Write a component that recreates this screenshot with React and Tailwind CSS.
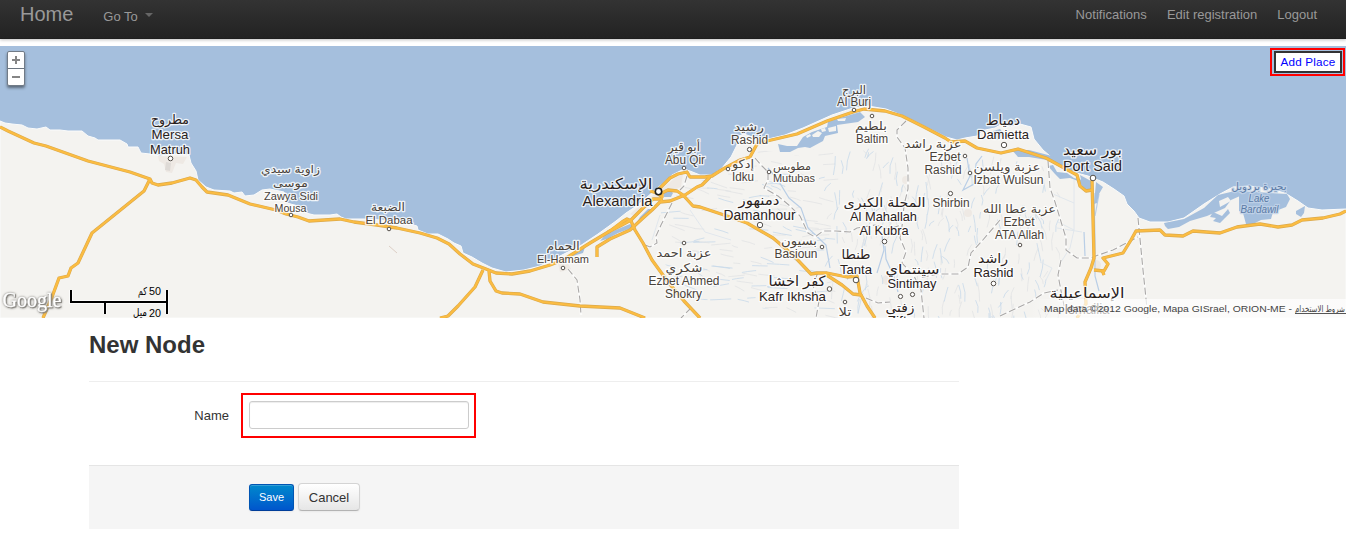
import React from "react";

const COAST =
  "M0 121L5 123L12 124L22 125L28 128L37 129L46 127L50 130L60 130L68 131L82 131L88 136L95 138L98 140L120 140L127 144L128 147L138 147L141 153L150 154L160 156L174 154L189 155L191 163L196 171L198 180L206 187L214 190L230 191L234 193L242 192L245 196L254 195L262 190L270 189L284 192L287 203L298 206L306 213L314 215L330 215L337 214L341 217L346 219L364 219L400 221L410 224L417 226L418 230L428 234L438 234L448 239L454 243L461 246L463 253L472 257L482 263L492 268L506 272L524 270L540 266L556 258L580 246L598 234L616 221L626 213L638 205L646 198L654 191L662 184L672 175L684 169L690 171L700 175L712 175L722 168L731 157L737 145L739 136L744 134L755 138L768 139L785 135L803 128L832 115L853 108L868 106L886 109L904 116L928 128L946 137L957 140L965 138L977 136L985 130L995 128L1002 124L1010 127L1020 124L1031 127L1034 139L1043 150L1057 162L1073 172L1088 176L1103 182L1114 189L1124 196L1127 204L1134 211L1139 218L1150 222L1168 222L1184 218L1204 204L1220 194L1233 187L1250 186L1270 189L1285 193L1298 201L1308 208L1322 210L1346 209V318H0Z";

const WATER = [
  "M1164 223L1184 219L1204 208L1218 195L1239 190L1240 196L1231 200L1225 208L1207 216L1190 221L1179 227L1168 229L1165 226Z",
  "M1239 191L1287 194L1290 199L1286 207L1273 212L1271 219L1261 220L1253 224L1246 224L1243 213L1239 211Z",
  "M1213 212L1222 216L1228 209L1230 213L1225 218L1220 223L1213 221L1216 218L1210 217Z",
  "M1296 211L1305 206L1304 213L1301 217L1296 214Z",
  "M778 144L787 146L797 146L803 137L812 132L827 127L828 122L840 118L860 112L865 117L858 122L837 125L838 133L825 136L823 141L810 148L805 147L798 148L790 152L780 152Z",
  "M993 131L1000 129L1004 134L998 140L991 137Z",
  "M1012 150L1029 150L1048 155L1060 158L1066 163L1060 167L1047 160L1029 157L1018 157Z",
  "M1048 166L1053 165L1057 172L1067 173L1074 178L1087 181L1091 186L1085 189L1078 181L1070 178L1060 179L1055 174Z",
  "M1080 175L1091 181L1091 191L1083 188Z",
  "M1096 182L1103 187L1099 194L1097 203L1094 204Z",
  "M600 241L606 234L618 229L630 224L634 227L618 233L607 239Z",
  "M640 217L648 209L652 209L644 218L636 224Z",
  "M664 193L670 190L673 193L671 197L664 197Z",
  "M574 251L585 247L583 253L573 256Z",
];

const ISLANDS = [
  "M812 135L818 131L822 133L819 137L813 137Z",
  "M821 129L825 128L826 131L822 132Z",
  "M828 128L836 126L836 131L829 132Z",
  "M837 119L846 118L845 121L838 121Z",
  "M806 136L810 134L811 136L807 138Z",
  "M1219 201L1228 197L1231 201L1220 207Z",
];

const ROADS = [
  "M0 127L8 131L34 143L46 146L88 161L130 172L150 179L152 183L158 185L172 183L190 178L196 180L202 187L207 192L228 195L250 204L276 210L286 214L298 217L309 221L340 219L354 222L377 225L397 228L420 233L437 238L449 244L460 254L473 264L486 269L496 273L512 274L530 271L550 265L563 260L590 243L610 231L622 222L627 219L631 221L635 230L643 243L652 260L668 282L684 301L700 318",
  "M150 179L144 191L92 233L78 263L71 268L68 276L59 278L52 297L43 318",
  "M483 270L475 287L458 306L448 316L440 318",
  "M489 271L490 281L496 291L502 293L520 294L543 302L580 306L600 307L620 308L640 316L645 318",
  "M597 257L597 247L610 239L630 230L643 218L652 210L660 202L670 201L685 195L697 187L702 185L710 177",
  "M608 232L620 226L631 220L643 208L653 199L661 199L662 202",
  "M650 191L657 193L662 197L662 193L668 190L677 191L683 195L693 206L700 207L727 216L747 223L773 238L793 255L811 274L817 273L827 273L847 277L857 276L860 293L867 306L875 318",
  "M658 190L670 178L678 174L687 172L690 177L705 177L712 176L723 169L740 160L750 157L757 144L767 141L797 134L827 121L853 112L864 109L885 111L902 116L924 127L945 138L951 142L965 141L977 148L1001 153L1018 149L1046 158L1077 175L1080 186L1086 191L1092 190",
  "M825 274L842 285L853 294L861 295",
  "M1092 180L1093 218L1094 258L1091 268L1085 282L1086 304L1077 318",
  "M1094 270L1104 271L1108 264L1103 258L1111 256L1123 253L1131 240L1136 231L1160 230L1165 235L1183 236L1193 231L1220 233L1237 227L1260 224L1278 227L1292 225L1302 220L1323 218L1340 214L1346 211",
  "M1102 270L1104 275",
];

const RAILS = [
  "M672 203L661 225L656 236L657 243L650 247L645 245",
  "M687 176L684 186L680 190",
  "M568 269L577 280L580 300L581 315",
  "M755 158L762 166L768 172L768 180L764 188L778 196L790 206L800 216L808 233L815 237L823 231L836 231L850 232L857 228L875 225L889 229L901 225",
  "M906 121L897 130L897 137L905 148L908 168L908 189L904 205L903 220L900 238L906 252L902 263L914 276L921 290L924 318",
  "M1048 161L1050 188L1055 202L1066 238L1066 250L1077 258L1090 258L1113 250L1138 237",
  "M1061 260L1058 275L1062 296L1065 310",
  "M1138 218L1143 270L1148 318",
  "M1000 220L982 241L971 253L968 267L958 274L938 274L920 278",
  "M1000 316L1030 302L1044 293L1058 290",
  "M818 272L813 286L819 301L816 318",
  "M866 298L878 303L890 302",
  "M691 308L681 318",
];

const RIVERS = [
  "M885 246L886 259L894 277L898 292",
  "M1094 193L1095 240L1095 276L1099 291",
  "M1099 194L1095 216",
  "M1084 232L1085 256",
  "M768 168L778 180L789 198L801 208L808 228L826 245L830 268",
  "M967 158L970 176L963 190L974 184L976 164L982 156",
  "M882 235L884 250L877 273",
];

function seeded(seed) {
  let s = seed;
  return () => {
    s = (s * 16807) % 2147483647;
    return s / 2147483647;
  };
}

function buildCanals() {
  const next = seeded(4211);
  const lines = [];
  for (let i = 0; i < 430; i++) {
    const x = 650 + next() * 420;
    const y = 145 + next() * 172;
    const wide = x < 830;
    const dx = wide ? 6 + next() * 14 : -5 + next() * 9;
    const dy = wide ? -3 + next() * 9 : 5 + next() * 14;
    const bend = -3 + next() * 6;
    const d = `M${x.toFixed(1)} ${y.toFixed(1)}l${(dx / 2 + bend).toFixed(1)} ${(dy / 2).toFixed(1)}l${(dx / 2).toFixed(1)} ${(dy / 2).toFixed(1)}`;
    lines.push({ d, blue: next() > 0.52 });
  }
  return lines;
}

const CANALS = buildCanals();

// [text, centre x, baseline y, font size, width, colour]
const TOWN = "#49423a";
const CITY = "#29211b";
const LABELS = [
  ["مطروح", 170, 124, 13, 38, CITY],
  ["Mersa", 170, 139, 13, 37, CITY],
  ["Matruh", 170, 153.5, 13, 40, CITY],
  ["زاوية سيدي", 290.5, 173, 11, 59, TOWN],
  ["موسى", 290.5, 187, 11, 35, TOWN],
  ["Zawya Sidi", 291, 200, 11.5, 54, TOWN],
  ["Mousa", 290.5, 212, 11.5, 32, TOWN],
  ["الضبعة", 388, 211, 11.5, 34, TOWN],
  ["El Dabaa", 389, 224, 11.5, 47, TOWN],
  ["الحمام", 563, 250, 11.5, 33, TOWN],
  ["El-Hamam", 563, 263, 11.5, 52, TOWN],
  ["الإسكندرية", 616, 189, 15, 73, CITY],
  ["Alexandria", 617.5, 206, 15, 70, CITY],
  ["أبو قير", 684, 151, 12, 32, TOWN],
  ["Abu Qir", 685, 164, 12, 40, TOWN],
  ["رشيد", 749, 131, 12, 30, TOWN],
  ["Rashid", 749.5, 144, 12, 37, TOWN],
  ["إدكو", 743, 168, 12, 22, TOWN],
  ["Idku", 743, 181, 12, 22, TOWN],
  ["مطوبس", 792, 170, 11, 38, TOWN],
  ["Mutubas", 794, 182, 11, 42, TOWN],
  ["دمنهور", 759, 205, 14, 41, CITY],
  ["Damanhour", 759.5, 219.5, 14, 72, CITY],
  ["بسيون", 799, 245, 12, 36, TOWN],
  ["Basioun", 796, 258, 12, 43, TOWN],
  ["عزبة احمد", 684, 257, 12, 55, TOWN],
  ["شكري", 684, 272, 12, 37, TOWN],
  ["Ezbet Ahmed", 684, 285, 12, 71, TOWN],
  ["Shokry", 683.5, 298, 12, 37, TOWN],
  ["كفر اخشا", 797, 286, 14, 57, CITY],
  ["Kafr Ikhsha", 792.5, 301, 13, 67, CITY],
  ["تلا", 845, 316, 12, 13, TOWN],
  ["البرج", 854, 94, 12, 24, TOWN],
  ["Al Burj", 854, 106, 12, 34, TOWN],
  ["بلطيم", 871, 130, 12, 32, TOWN],
  ["Baltim", 872, 143, 12, 32, TOWN],
  ["دمياط", 1003, 125, 14, 34, CITY],
  ["Damietta", 1003, 139, 13.5, 52, CITY],
  ["عزبة راشد", 933, 148, 12, 57, TOWN],
  ["Ezbet", 945, 160.5, 12, 31, TOWN],
  ["Rashid", 943, 174, 12, 37, TOWN],
  ["عزبة ويلسن", 1007, 171, 12, 67, TOWN],
  ["Izbat Wulsun", 1008.5, 184, 12, 70, TOWN],
  ["المحلة الكبرى", 884.5, 207, 13, 82, CITY],
  ["Al Mahallah", 883.5, 221, 13, 67, CITY],
  ["Al Kubra", 884, 235, 13, 49, CITY],
  ["Shirbin", 951, 207, 12, 37, TOWN],
  ["عزبة عطا الله", 1019.5, 213, 12, 73, TOWN],
  ["Ezbet", 1019, 226, 12, 31, TOWN],
  ["ATA Allah", 1019.5, 239, 12, 49, TOWN],
  ["طنطا", 856, 259, 13, 29, CITY],
  ["Tanta", 856, 273.5, 13.5, 32, CITY],
  ["سينتماي", 912.5, 274, 13, 54, CITY],
  ["Sintimay", 912, 288, 13, 49, CITY],
  ["راشد", 993, 263, 13, 30, CITY],
  ["Rashid", 993.5, 277, 13, 40, CITY],
  ["زفتى", 900, 312, 13, 29, CITY],
  ["Zifta", 901, 325, 12, 27, CITY],
  ["بور سعيد", 1092.5, 155, 15, 59, CITY],
  ["Port Said", 1092.5, 171, 15, 59, CITY],
  ["الإسماعيلية", 1087, 298, 14, 75, CITY],
  ["Ismailia", 1087, 314, 14, 45, CITY],
];

const LAKE_LABELS = [
  ["بحيرة بردويل", 1259, 190, 10.5, 55],
  ["Lake", 1259, 202, 11, 21],
  ["Bardawil", 1259.5, 213, 11, 38],
];

const DOTS = [
  [170.5, 158.5, 2.3], [291, 215, 1.8], [389, 229, 1.8], [563, 268, 1.8],
  [684, 168, 1.8], [749.5, 149.5, 2.1], [728, 169, 1.8], [769, 172, 1.8],
  [760, 225, 2.7], [822, 247, 1.8], [684, 243, 1.8], [829.5, 289, 2.3],
  [845, 302, 1.8], [854, 110, 1.8], [872, 116, 1.8], [1004, 145, 2.7],
  [965, 156, 1.8], [970, 173, 1.8], [950.5, 193.5, 2.1], [884.5, 241.5, 2.3],
  [1020, 245, 1.8], [856, 280, 2.8], [912.5, 294.5, 2.1], [900.5, 296.5, 2.1],
  [993.5, 283.5, 2.3], [1093, 178, 2.8],
];

function Line({ label, color, halo, italic }) {
  const [text, x, y, size, width] = label;
  const arabic = /[\u0600-\u06ff]/.test(text);
  return (
    <text
      x={x}
      y={y}
      fontSize={size}
      textLength={width}
      lengthAdjust="spacingAndGlyphs"
      textAnchor="middle"
      fill={color}
      stroke={halo}
      strokeWidth="2.6"
      strokeOpacity="0.8"
      strokeLinejoin="round"
      paintOrder="stroke"
      direction={arabic ? "rtl" : "ltr"}
      fontStyle={italic && !arabic ? "italic" : "normal"}
    >
      {text}
    </text>
  );
}

function MapCanvas() {
  return (
    <svg
      viewBox="0 46 1346 272"
      className="block h-[272px] w-[1346px] font-['Liberation_Sans','DejaVu_Sans',sans-serif]"
    >
      <defs>
        <clipPath id="delta">
          <path d="M650 210L690 184L725 174L760 150L800 156L835 140L870 128L885 118L945 146L1000 158L1050 168L1060 190L1060 318H830L690 298L655 250L640 232Z" />
        </clipPath>
      </defs>
      <rect x="0" y="46" width="1346" height="272" fill="#a5bfdd" />
      <path d={COAST} fill="#f4f3f0" stroke="#fafbfb" strokeWidth="1" />
      <g fill="#eee9e4">
        <path d="M158 156L187 157L183 164L176 163L172 173L166 172L164 164L159 161Z" />
        <path d="M558 264L568 263L571 269L560 272Z" />
        <path d="M630 214L645 201L664 187L675 178L683 174L681 187L661 195L646 208L634 216Z" />
        <circle cx="1096" cy="265" r="5" />
        <circle cx="887" cy="280" r="5" />
        <circle cx="906" cy="180" r="4" />
        <circle cx="968" cy="213" r="4" />
      </g>
      <path d="M166 162L171 163L170 171L165 170Z" fill="#dedad6" />
      <g clipPath="url(#delta)" fill="none" strokeWidth="0.8">
        {CANALS.map((c, i) => (
          <path key={i} d={c.d} stroke={c.blue ? "#c8d9ea" : "#e2e3e4"} />
        ))}
      </g>
      <g fill="none" stroke="#dfe5ec" strokeWidth="0.9">
        <path d="M1074 180V230L1058 222M1074 230L1070 248L1061 262M1057 228L1082 232M1053 194L1074 203M1040 262L1052 268L1045 282M660 215L652 240M690 210L705 232L731 240" />
      </g>
      <g fill="none" stroke="#b9cee6" strokeWidth="1.2">
        {RIVERS.map((d) => <path key={d} d={d} />)}
      </g>
      <g fill="#a5bfdd">
        {WATER.map((d) => <path key={d} d={d} />)}
      </g>
      <g fill="#f4f3f0">
        {ISLANDS.map((d) => <path key={d} d={d} />)}
      </g>
      <g fill="none" stroke="#fbfbfa" strokeWidth="2.4">
        {RAILS.map((d) => <path key={d} d={d} />)}
      </g>
      <g fill="none" stroke="#aaa8a7" strokeWidth="1.1" strokeDasharray="7 3">
        {RAILS.map((d) => <path key={d} d={d} />)}
      </g>
      <path d="M389 246L397 253" stroke="#ddcfc6" strokeWidth="1" />
      <g fill="none" stroke="#dba94b" strokeWidth="3.3" strokeLinejoin="round">
        {ROADS.map((d) => <path key={d} d={d} />)}
      </g>
      <g fill="none" stroke="#fbbc42" strokeWidth="2.2" strokeLinejoin="round">
        {ROADS.map((d) => <path key={d} d={d} />)}
      </g>
      <g>
        {LABELS.map((l, i) => <Line key={i} label={l} color={l[5]} halo="#ffffff" />)}
        {LAKE_LABELS.map((l) => <Line key={l[0]} label={l} color="#5b7ba6" halo="#c3d4e9" italic />)}
      </g>
      <g fill="#fff" stroke="#55504b" strokeWidth="1">
        {DOTS.map(([x, y, r]) => <circle key={`${x}-${y}`} cx={x} cy={y} r={r} />)}
      </g>
      <circle cx="658.5" cy="191.5" r="3.2" fill="#fff" stroke="#222" strokeWidth="1.6" />
      <g fontSize="20" className="font-['Liberation_Serif',serif]">
        <text
          x="2.5"
          y="307"
          textLength="59"
          lengthAdjust="spacingAndGlyphs"
          fill="#ffffff"
          stroke="#ffffff"
          strokeWidth="0.3"
          className="[filter:drop-shadow(1px_1px_0px_#8a8883)_drop-shadow(0_0_0.8px_#7d7b77)]"
        >
          Google
        </text>
      </g>
      <path d="M71 290V302H167M167 290V314M105 302V314" fill="none" stroke="#fff" strokeOpacity="0.7" strokeWidth="4" />
      <path d="M71 290V302H167M167 290V314M105 302V314" fill="none" stroke="#000" strokeWidth="2" />
      <g fontSize="11" fill="#000">
        <text x="149" y="295" textLength="12" lengthAdjust="spacingAndGlyphs">50</text>
        <text x="138" y="295" textLength="9" lengthAdjust="spacingAndGlyphs">كم</text>
        <text x="149" y="317" textLength="12" lengthAdjust="spacingAndGlyphs">20</text>
        <text x="133" y="316" textLength="14" lengthAdjust="spacingAndGlyphs">ميل</text>
      </g>
    </svg>
  );
}

function ZoomControl() {
  return (
    <div className="absolute left-[7px] top-[5px] flex w-[18px] flex-col rounded-[2px] border border-[#717b87] bg-white shadow-[0_2px_3px_rgba(0,0,0,0.45)]">
      <button className="flex h-[17px] items-center justify-center border-b border-[#6b7580]">
        <svg viewBox="0 0 8 8" className="size-2"><path d="M4 0V8M0 4H8" stroke="#858585" strokeWidth="2" /></svg>
      </button>
      <button className="flex h-4 items-center justify-center">
        <svg viewBox="0 0 8 8" className="size-2"><path d="M0 4H8" stroke="#858585" strokeWidth="2" /></svg>
      </button>
    </div>
  );
}

function Navbar() {
  return (
    <nav className="relative flex h-[39px] justify-between bg-linear-to-b from-[#333] to-[#222] text-[13px] leading-[18px] text-[#999] shadow-[0_1px_3px_rgba(0,0,0,0.25),inset_0_-1px_0_rgba(0,0,0,0.1)]">
      <div className="flex pl-5">
        <a className="pt-1 text-[20px] leading-5">Home</a>
        <a className="ml-[30px] flex pt-2">
          Go To
          <span className="ml-[7px] mt-[5px] h-0 w-0 border-x-4 border-t-4 border-x-transparent border-t-[#666]" />
        </a>
      </div>
      <div className="flex gap-5 pr-[29px] pt-[6px]">
        <a className="tracking-[0.04px]">Notifications</a>
        <a>Edit registration</a>
        <a>Logout</a>
      </div>
    </nav>
  );
}

export default function App() {
  return (
    <div className="h-[536px] w-[1346px] overflow-hidden bg-white font-['Liberation_Sans','DejaVu_Sans',sans-serif] text-[13px] leading-[18px] text-[#333]">
      <Navbar />
      <section className="relative mt-[7px] h-[272px] overflow-hidden">
        <MapCanvas />
        <ZoomControl />
        <div className="absolute right-px top-[2px] border-2 border-[#f00] p-px pl-[2px]">
          <button className="block h-[22px] w-[68px] whitespace-nowrap border-2 border-[#333] bg-white text-[11.7px] leading-[18px] tracking-[0.2px] text-[#00f]">
            Add Place
          </button>
        </div>
        <div className="absolute bottom-0 right-0 flex h-[19px] w-[316px] items-center justify-end whitespace-nowrap bg-linear-to-r from-white/0 to-white/70 to-[50px] text-[10px] text-[#444]">
          <svg viewBox="0 0 302 19" className="h-[19px] w-[302px]">
            <text x="0" y="13" fontSize="9.5" fill="#444" textLength="248" lengthAdjust="spacingAndGlyphs">
              Map data ©2012 Google, Mapa GISrael, ORION-ME -
            </text>
            <text x="251" y="13" fontSize="9" fill="#444" textLength="50" lengthAdjust="spacingAndGlyphs">
              شروط الاستخدام
            </text>
            <path d="M251 14.5H302" stroke="#555" />
          </svg>
        </div>
      </section>
      <main className="ml-[89px] w-[870px]">
        <h1 className="h-[63px] pt-[9px] text-2xl font-bold leading-9">New Node</h1>
        <form>
          <div className="flex h-[84px] items-start border-t border-[#eee] pt-[11px]">
            <label className="w-[140px] pt-[14px] text-right">Name</label>
            <div className="ml-3 border-2 border-[#f00] pb-[7px] pl-[6px] pr-[5px] pt-[6px]">
              <input className="block h-[28px] w-[220px] rounded-[3px] border border-[#ccc] bg-white shadow-[inset_0_1px_1px_rgba(0,0,0,0.075)]" />
            </div>
          </div>
          <div className="flex h-16 items-end gap-1 border-t border-[#e5e5e5] bg-[#f5f5f5] pb-[18px] pl-40">
            <button className="h-[27px] w-[45px] rounded-[3px] border border-[#0055b3] border-b-[#003d99] bg-linear-to-b from-[#0088cc] to-[#0055cc] pb-px text-[11px] leading-4 text-white shadow-[inset_0_1px_0_rgba(255,255,255,0.2),0_1px_2px_rgba(0,0,0,0.05)]">
              Save
            </button>
            <button className="h-7 w-[62px] rounded-[4px] border border-[#d4d4d4] border-b-[#b3b3b3] bg-linear-to-b from-white to-[#e6e6e6] pt-px text-[13px] leading-[18px] shadow-[inset_0_1px_0_rgba(255,255,255,0.2),0_1px_2px_rgba(0,0,0,0.05)]">
              Cancel
            </button>
          </div>
        </form>
      </main>
    </div>
  );
}
